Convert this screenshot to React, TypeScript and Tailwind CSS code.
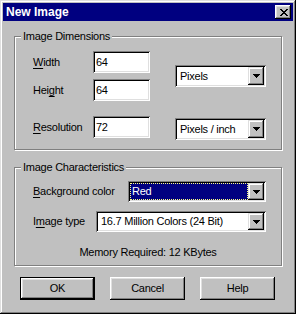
import React from "react";

const sunken =
  "shadow-[inset_1px_1px_#808080,inset_-1px_-1px_#fff,inset_2px_2px_#000,inset_-2px_-2px_#dfdfdf]";
const raised =
  "shadow-[inset_-1px_-1px_#000,inset_1px_1px_#fff,inset_-2px_-2px_#808080,inset_2px_2px_#dfdfdf]";
const arrowBtn =
  "shadow-[inset_-1px_-1px_#000,inset_1px_1px_#dfdfdf,inset_-2px_-2px_#808080,inset_2px_2px_#fff]";
const ul = "underline underline-offset-2 [text-decoration-skip-ink:none]";

const Arrow = () => (
  <svg width="7" height="4" viewBox="0 0 7 4" shapeRendering="crispEdges">
    <path d="M0 0h7v1H0zM1 1h5v1H1zM2 2h3v1H2zM3 3h1v1H3z" fill="#000" />
  </svg>
);

const CloseGlyph = () => (
  <svg width="8" height="7" viewBox="0 0 8 7" shapeRendering="crispEdges">
    <path
      d="M0 0h2v1H0zM6 0h2v1H6zM1 1h2v1H1zM5 1h2v1H5zM2 2h4v1H2zM3 3h2v1H3zM2 4h4v1H2zM1 5h2v1H1zM5 5h2v1H5zM0 6h2v1H0zM6 6h2v1H6z"
      fill="#000"
    />
  </svg>
);

// Win95 style combo box
const Dropdown = ({ text, className, focused }: { text: string; className: string; focused?: boolean }) => (
  <div className={`flex bg-white p-[2px] ${sunken} ${className}`}>
    {focused ? (
      <div className="flex flex-1 items-center bg-[#000080] pl-[2px] text-white outline outline-1 outline-dotted outline-[#ffff80] -outline-offset-1">
        {text}
      </div>
    ) : (
      <div className="flex flex-1 items-center pl-[3px]">{text}</div>
    )}
    <div className={`flex w-[16px] items-center justify-center bg-[#c0c0c0] ${arrowBtn}`}>
      <Arrow />
    </div>
  </div>
);

const TextBox = ({ value }: { value: string }) => (
  <div className={`flex h-[22px] w-[57px] items-center bg-white pl-[3px] ${sunken}`}>{value}</div>
);

const Group = ({ title, className, children }: { title: string; className: string; children: React.ReactNode }) => (
  <div
    className={`relative ml-[11px] w-[268px] border border-[#808080] shadow-[1px_1px_0_#fff,inset_1px_1px_0_#fff] ${className}`}
  >
    <span className="absolute left-[6px] top-[-8px] bg-[#c0c0c0] px-[2px] leading-[14px]">{title}</span>
    {children}
  </div>
);

const Button = ({ label, isDefault }: { label: string; isDefault?: boolean }) => (
  <button
    className={`flex h-[23px] w-[75px] items-center justify-center bg-[#c0c0c0] ${
      isDefault ? "border border-black" : ""
    }`}
  >
    <span className={`flex h-full w-full items-center justify-center ${raised}`}>{label}</span>
  </button>
);

export default function App() {
  return (
    <div
      className={`flex h-[314px] w-[296px] flex-col bg-[#c0c0c0] p-[3px] font-['Liberation_Sans',Arial,sans-serif] text-[11px] tracking-[-0.25px] text-black shadow-[inset_-1px_-1px_#000,inset_1px_1px_#dfdfdf,inset_-2px_-2px_#808080,inset_2px_2px_#fff]`}
    >
      {/* title bar */}
      <div className="flex h-[18px] items-center justify-between bg-[#000080] pl-[3px] pr-[2px]">
        <span className="text-[12px] font-bold tracking-normal text-white">New Image</span>
        <div className={`flex h-[14px] w-[16px] items-center justify-center bg-[#c0c0c0] pl-[1px] ${raised}`}>
          <CloseGlyph />
        </div>
      </div>

      <Group title="Image Dimensions" className="mt-[15px] h-[114px]">
        <div className="flex pl-[18px] pt-[14px]">
          <div className="flex flex-col">
            <div className="flex h-[22px] items-center">
              <span className="w-[60px]">
                <span className={ul}>W</span>idth
              </span>
              <TextBox value="64" />
            </div>
            <div className="mt-[6px] flex h-[22px] items-center">
              <span className="w-[60px]">
                Hei<span className={ul}>g</span>ht
              </span>
              <TextBox value="64" />
            </div>
            <div className="mt-[15px] flex h-[22px] items-center">
              <span className="w-[60px]">
                <span className={ul}>R</span>esolution
              </span>
              <TextBox value="72" />
            </div>
          </div>
          <div className="ml-[25px] flex flex-col">
            <Dropdown text="Pixels" className="mt-[14px] h-[22px] w-[91px]" />
            <Dropdown text="Pixels / inch" className="mt-[31px] h-[22px] w-[91px]" />
          </div>
        </div>
      </Group>

      <Group title="Image Characteristics" className="mt-[17px] h-[99px]">
        <div className="flex flex-col pl-[18px] pt-[13px]">
          <div className="flex h-[21px] items-center">
            <span className="w-[95px]">
              <span className={ul}>B</span>ackground color
            </span>
            <Dropdown text="Red" focused className="h-[21px] w-[138px]" />
          </div>
          <div className="mt-[9px] flex h-[21px] items-center">
            <span className="w-[63px]">
              I<span className={ul}>m</span>age type
            </span>
            <Dropdown text="16.7 Million Colors (24 Bit)" className="h-[21px] w-[170px]" />
          </div>
        </div>
        <div className="mt-[13px] text-center leading-[14px]">Memory Required: 12 KBytes</div>
      </Group>

      <div className="ml-[17px] mt-[11px] flex gap-[15px]">
        <Button label="OK" isDefault />
        <Button label="Cancel" />
        <Button label="Help" />
      </div>
    </div>
  );
}
